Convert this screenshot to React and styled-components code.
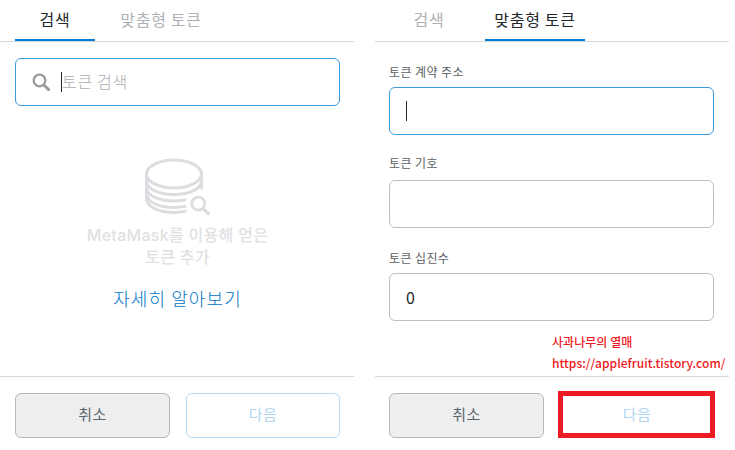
import React from "react";
import styled, { createGlobalStyle } from "styled-components";

const GlobalStyle = createGlobalStyle`
  html, body {
    margin: 0;
    padding: 0;
    background: #fff;
  }
  body {
    font-family: "Noto Sans CJK KR", "Open Sans", sans-serif;
  }
`;

const Page = styled.div`
  width: 735px;
  height: 450px;
  display: flex;
  gap: 21px;
  overflow: hidden;
`;

const Panel = styled.section`
  position: relative;
  width: 354px;
  height: 450px;
  display: flex;
  flex-direction: column;
`;

const TabBar = styled.div`
  height: 41px;
  flex: none;
  display: flex;
  gap: 16px;
  padding-left: ${(props) => props.$inset}px;
  border-bottom: 1px solid #d6d9dc;
`;

const Tab = styled.div`
  width: ${(props) => props.$width}px;
  height: 41px;
  box-sizing: border-box;
  padding-top: 7px;
  text-align: center;
  font-size: 16px;
  line-height: 24px;
  letter-spacing: 0.7px;
  color: ${(props) => (props.$active ? "#24272a" : "#adb0b4")};
  border-bottom: ${(props) => (props.$active ? "2px solid #037dd6" : "none")};
`;

const Body = styled.div`
  flex: 1;
  min-height: 0;
  display: flex;
  flex-direction: column;
  padding: ${(props) => props.$top}px 14px 0 ${(props) => props.$inset}px;
`;

const Field = styled.div`
  width: 325px;
  height: 48px;
  flex: none;
  box-sizing: border-box;
  display: flex;
  align-items: center;
  padding-left: 16px;
  border: 1px solid ${(props) => (props.$focused ? "#3a9ad9" : "#bbc0c5")};
  border-radius: 6px;
  background: #fff;
  font-size: 16px;
  color: #24272a;
`;

const SearchIcon = styled.svg`
  width: 18px;
  height: 18px;
  margin-right: 11px;
  flex: none;
`;

const Caret = styled.span`
  width: 1px;
  height: 20px;
  flex: none;
  background: #24272a;
`;

const Placeholder = styled.span`
  position: relative;
  top: -1px;
  font-size: 16px;
  font-weight: 300;
  color: #a9adb1;
  letter-spacing: 0.7px;
`;

const Empty = styled.div`
  display: flex;
  flex-direction: column;
  align-items: center;
  width: 325px;
  padding-top: 50px;
`;

const CoinIcon = styled.svg`
  width: 68px;
  height: 60px;
  margin-right: 2px;
`;

const EmptyText = styled.div`
  margin-top: 8px;
  font-family: "Inter", "Noto Sans CJK KR", sans-serif;
  font-size: 16px;
  font-weight: 500;
  line-height: 22px;
  letter-spacing: 0.3px;
  text-align: center;
  color: #e0e1e3;
`;

const LearnMore = styled.a`
  margin-top: 17px;
  font-size: 18px;
  font-weight: 300;
  line-height: 26px;
  letter-spacing: 1.1px;
  color: #0274c8;
`;

const Label = styled.label`
  height: 19px;
  margin: ${(props) => props.$top}px 0 ${(props) => props.$bottom}px;
  font-size: 12px;
  line-height: 18px;
  letter-spacing: 0.4px;
  color: #5b5f63;
`;

const Footer = styled.div`
  height: 74px;
  flex: none;
  box-sizing: border-box;
  display: flex;
  gap: 16px;
  padding: 16px 14px 0 ${(props) => props.$inset}px;
  border-top: 1px solid #d6d9dc;
`;

const Button = styled.button`
  width: ${(props) => (props.$primary ? 154 : 155)}px;
  height: 45px;
  padding: 0 0 4px;
  border-radius: 6px;
  border: 1px solid ${(props) => (props.$primary ? "#b3d9f3" : "#b5b7b9")};
  background: ${(props) => (props.$primary ? "#fff" : "#eeeeee")};
  color: ${(props) => (props.$primary ? "#aed6f2" : "#5b6770")};
  font-family: inherit;
  font-size: 15px;
  letter-spacing: 0.4px;
`;

const Highlight = styled.div`
  position: absolute;
  left: 183px;
  top: 391px;
  width: 157px;
  height: 47px;
  box-sizing: border-box;
  border: 5px solid #ed1c24;
  pointer-events: none;
`;

const Watermark = styled.div`
  position: absolute;
  left: 177px;
  top: 331px;
  font-family: "Noto Sans CJK KR", sans-serif;
  font-size: 12px;
  font-weight: 500;
  line-height: 21px;
  letter-spacing: 0.05px;
  color: #f01822;
  white-space: nowrap;
`;

const Magnifier = () => (
  <SearchIcon viewBox="0 0 18 18" fill="none" stroke="#9b9b9b">
    <circle cx="7.5" cy="7.5" r="5.8" strokeWidth="2.3" />
    <path d="M12 12l4.6 4.6" strokeWidth="3" strokeLinecap="round" />
  </SearchIcon>
);

const Coins = () => (
  <CoinIcon viewBox="0 0 68 60" fill="none">
    <g stroke="#dcdde0" strokeWidth="3" strokeLinecap="round">
      <ellipse cx="31" cy="18" rx="27.5" ry="14" />
      <path d="M3.5 18v25" />
      <path d="M58.500 18v14" />
      <path d="M3.500 25c0 7.500 12 13.500 27.500 13.500s27.500-6 27.500-13.500" />
      <path d="M3.500 31.500c0 7.500 12 13.500 27.500 13.500 3.800 0 8-.4 11-1.100" />
      <path d="M3.500 38c0 7.500 12 13.500 27.500 13.500 3.800 0 8-.4 11-1.100" />
      <path d="M3.500 43c0 7.500 12 13.500 27.500 13.500 3.800 0 8-.4 11-1.100" />
      <circle cx="55.300" cy="47.700" r="6.500" strokeWidth="2.800" />
      <path d="M60.500 53L65.300 57.700" strokeWidth="3.200" />
    </g>
  </CoinIcon>
);

const Tabs = ({ active, inset }) => (
  <TabBar $inset={inset}>
    <Tab $width={80} $active={active === "search"}>검색</Tab>
    <Tab $width={100} $active={active === "custom"}>맞춤형 토큰</Tab>
  </TabBar>
);

const Actions = ({ inset }) => (
  <Footer $inset={inset}>
    <Button>취소</Button>
    <Button $primary>다음</Button>
  </Footer>
);

const App = () => {
  return (
    <Page>
      <GlobalStyle />
      <Panel>
        <Tabs active="search" inset={15} />
        <Body $top={16} $inset={15}>
          <Field $focused>
            <Magnifier />
            <Caret />
            <Placeholder>토큰 검색</Placeholder>
          </Field>
          <Empty>
            <Coins />
            <EmptyText>
              MetaMask를 이용해 얻은
              <br />
              토큰 추가
            </EmptyText>
            <LearnMore>자세히 알아보기</LearnMore>
          </Empty>
        </Body>
        <Actions inset={15} />
      </Panel>
      <Panel>
        <Tabs active="custom" inset={14} />
        <Body $top={21} $inset={14}>
          <Label $top={0} $bottom={5}>토큰 계약 주소</Label>
          <Field $focused>
            <Caret />
          </Field>
          <Label $top={19} $bottom={7}>토큰 기호</Label>
          <Field />
          <Label $top={21} $bottom={5}>토큰 십진수</Label>
          <Field>0</Field>
        </Body>
        <Watermark>
          사과나무의 열매
          <br />
          https://applefruit.tistory.com/
        </Watermark>
        <Actions inset={14} />
        <Highlight />
      </Panel>
    </Page>
  );
};

export default App;
